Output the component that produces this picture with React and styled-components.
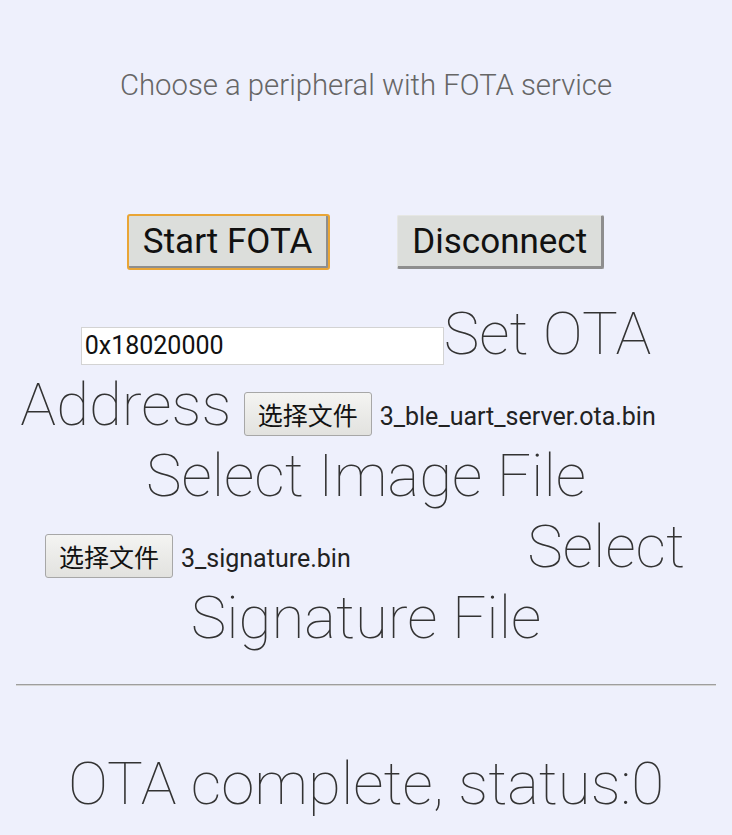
import React from 'react'
import styled, { createGlobalStyle } from 'styled-components'

const Global = createGlobalStyle`
  html, body {
    margin: 0;
    background: #eef0fc;
    font-family: Roboto, "Noto Sans CJK SC", sans-serif;
  }
`

const Page = styled.div`
  padding: 0 8px;
  min-height: 835px;
  box-sizing: border-box;
  overflow: hidden;
`

const Heading = styled.div`
  margin-top: 68px;
  text-align: center;
  font-size: 29.3px;
  font-weight: 300;
  color: #666;
`

const ButtonRow = styled.div`
  display: flex;
  justify-content: center;
  gap: 68px;
  margin-top: 113px;
`

const Button = styled.button`
  height: 54px;
  padding: 0 14px;
  font-family: Roboto, sans-serif;
  font-size: 35px;
  color: #111;
  background: #dcdedb;
  border-style: solid;
  border-width: 1px 3px 3px 1px;
  border-color: #e6e7e4 #8e8e8e #8e8e8e #e6e7e4;
  border-radius: 2px;
  outline: ${(p) => (p.$focused ? '2px solid #e9a536' : 'none')};
  outline-offset: -1px;
`

const Form = styled.div`
  margin-top: 29px;
  text-align: center;
  font-size: 60px;
  font-weight: 100;
  color: #333;
`

const Label = styled.span`
  font-size: 60px;
  font-weight: 100;
  color: #333;
`

const AddressInput = styled.input`
  width: 363px;
  height: 38px;
  box-sizing: border-box;
  padding: 0 3px;
  font-family: Roboto, sans-serif;
  font-size: 25px;
  border: 1px solid #d3d3d3;
  background: #fff;
  color: #111;
  vertical-align: baseline;
`

const FilePicker = styled.span`
  display: inline-flex;
  align-items: baseline;
  gap: 8px;
  width: 468px;
  margin-left: -2px;
  text-align: left;
  font-weight: 400;
`

const PickButton = styled.span`
  display: inline-flex;
  align-items: center;
  height: 44px;
  padding: 0 13px;
  box-sizing: border-box;
  font-size: 25px;
  color: #111;
  background: linear-gradient(#f4f4f2, #e2e2df);
  border: 1px solid #a7a7a7;
  border-radius: 3px;
  font-family: Roboto, "Noto Sans CJK SC", sans-serif;
`

const FileName = styled.span`
  font-size: 25px;
  color: #222;
`

const Rule = styled.hr`
  margin: 31px 8px 0;
  border: none;
  border-top: 1px solid #9e9e9e;
  border-bottom: 1px solid #d4d4d4;
`

const Status = styled.div`
  margin-top: 62px;
  text-align: center;
  font-size: 60px;
  font-weight: 100;
  color: #333;
`

const FileInput = ({ name }) => (
  <FilePicker>
    <PickButton>选择文件</PickButton>
    <FileName>{name}</FileName>
  </FilePicker>
)

export default function App() {
  return (
    <>
      <Global />
      <Page>
        <Heading>Choose a peripheral with FOTA service</Heading>
        <ButtonRow>
          <Button $focused>Start FOTA</Button>
          <Button>Disconnect</Button>
        </ButtonRow>
        <Form>
          <AddressInput defaultValue="0x18020000" />
          <Label>Set OTA Address</Label>{' '}
          <FileInput name="3_ble_uart_server.ota.bin" />{' '}
          <Label>Select Image File</Label>{' '}
          <FileInput name="3_signature.bin" />{' '}
          <Label>Select Signature File</Label>
        </Form>
        <Rule />
        <Status>OTA complete, status:0</Status>
      </Page>
    </>
  )
}
